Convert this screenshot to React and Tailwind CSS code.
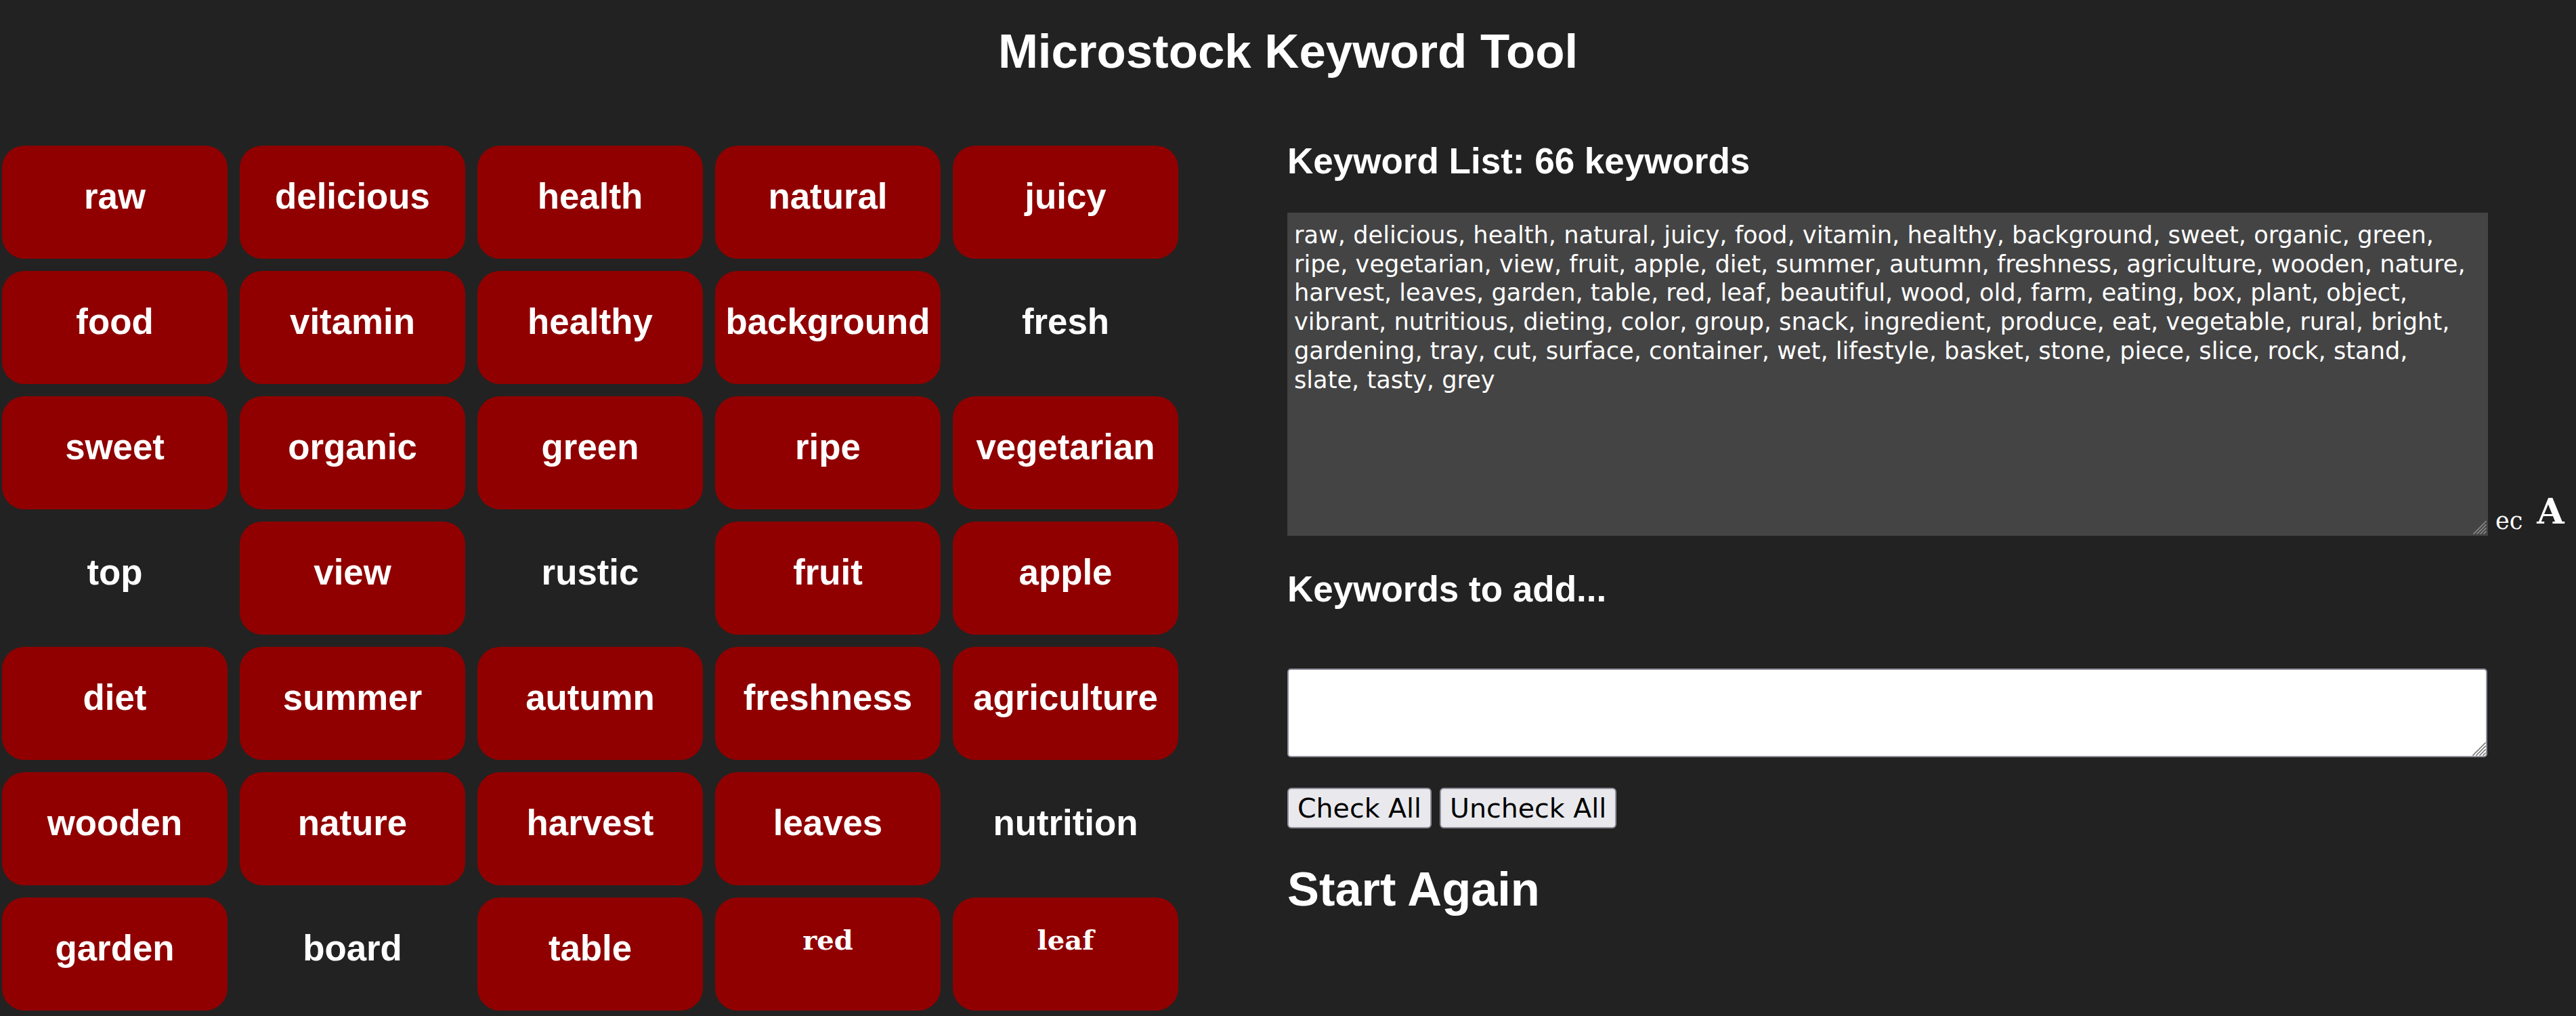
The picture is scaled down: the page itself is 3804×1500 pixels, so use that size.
import React from "react";

const rows = [
  [["raw", 1], ["delicious", 1], ["health", 1], ["natural", 1], ["juicy", 1]],
  [["food", 1], ["vitamin", 1], ["healthy", 1], ["background", 1], ["fresh", 0]],
  [["sweet", 1], ["organic", 1], ["green", 1], ["ripe", 1], ["vegetarian", 1]],
  [["top", 0], ["view", 1], ["rustic", 0], ["fruit", 1], ["apple", 1]],
  [["diet", 1], ["summer", 1], ["autumn", 1], ["freshness", 1], ["agriculture", 1]],
  [["wooden", 1], ["nature", 1], ["harvest", 1], ["leaves", 1], ["nutrition", 0]],
  [["garden", 1], ["board", 0], ["table", 1], ["red", 2], ["leaf", 2]],
];

const listText = [
  "raw, delicious, health, natural, juicy, food, vitamin, healthy, background, sweet, organic, green,",
  "ripe, vegetarian, view, fruit, apple, diet, summer, autumn, freshness, agriculture, wooden, nature,",
  "harvest, leaves, garden, table, red, leaf, beautiful, wood, old, farm, eating, box, plant, object,",
  "vibrant, nutritious, dieting, color, group, snack, ingredient, produce, eat, vegetable, rural, bright,",
  "gardening, tray, cut, surface, container, wet, lifestyle, basket, stone, piece, slice, rock, stand,",
  "slate, tasty, grey",
].join("\n");

function Grip({ color }) {
  return (
    <svg
      className="pointer-events-none absolute bottom-[2px] right-[2px]"
      width="22"
      height="22"
      viewBox="0 0 22 22"
    >
      <g stroke={color} strokeWidth="1.6" strokeLinecap="square">
        <line x1="21" y1="3" x2="3" y2="21" />
        <line x1="21" y1="8" x2="8" y2="21" />
        <line x1="21" y1="13" x2="13" y2="21" />
        <line x1="21" y1="18" x2="18" y2="21" />
      </g>
    </svg>
  );
}

function Cell({ word, kind }) {
  if (kind === 2) {
    return (
      <div className="flex h-[167px] items-center justify-center rounded-[33px] bg-[#900000] pb-[42px] font-['DejaVu_Serif',serif] text-[40px] font-bold leading-[normal] text-white">
        {word}
      </div>
    );
  }
  if (kind === 1) {
    return (
      <div className="flex h-[167px] items-center justify-center rounded-[33px] bg-[#900000] pb-[18px] text-[52.8px] font-bold leading-[normal] text-white">
        {word}
      </div>
    );
  }
  return (
    <div className="flex h-[167px] items-center justify-center pb-[18px] text-[52.8px] font-bold leading-[normal] text-white">
      {word}
    </div>
  );
}

export default function App() {
  return (
    <div className="h-[1500px] w-[3804px] overflow-hidden bg-[#222222] font-['Liberation_Sans',Arial,sans-serif] text-white">
      <div className="h-[207px] pt-[35px]">
        <h1 className="text-center text-[70.8px] font-bold leading-[81px]">Microstock Keyword Tool</h1>
      </div>
      <div className="flex items-start">
        <div className="mt-[8px] grid w-[1740px] grid-cols-[repeat(5,333px)] gap-[18px] pl-[3px]">
          {rows.flat().map(([w, k]) => (
            <Cell key={w} word={w} kind={k} />
          ))}
        </div>
        <div className="ml-[161px] flex flex-col">
          <h3 className="text-[53px] font-bold leading-[61px]">Keyword List: 66 keywords</h3>
          <div className="mt-[46px] flex items-end">
            <div className="relative">
              <textarea
                readOnly
                wrap="off"
                defaultValue={listText}
                className="block h-[477px] w-[1773px] resize-none overflow-hidden border-0 bg-[#444444] pl-[10px] pr-[2px] pt-[12px] font-['DejaVu_Sans',sans-serif] text-[35.2px] leading-[42.7px] text-white outline-none"
              />
              <Grip color="#8a8a8a" />
            </div>
            <span className="mb-[4px] ml-[11px] font-['DejaVu_Serif',serif] text-[35px] leading-[35px] text-white">ec</span>
            <span className="mb-[10px] ml-[21px] font-['DejaVu_Serif',serif] text-[52px] font-bold leading-[52px] text-white">A</span>
          </div>
          <h3 className="mt-[48px] text-[53px] font-bold leading-[61px]">Keywords to add...</h3>
          <div className="relative mt-[87px] w-[1772px]">
            <textarea className="block h-[131px] w-[1772px] resize-none rounded-[5px] border-2 border-[#8f8f9d] bg-white outline-none" />
            <Grip color="#777777" />
          </div>
          <div className="mt-[45px] flex gap-[12px]">
            <button className="h-[60px] rounded-[6px] border-2 border-[#8f8f9d] bg-[#e9e9ed] px-[13px] font-['DejaVu_Sans',sans-serif] text-[39.5px] leading-[46px] text-black">
              Check All
            </button>
            <button className="h-[60px] rounded-[6px] border-2 border-[#8f8f9d] bg-[#e9e9ed] px-[13px] font-['DejaVu_Sans',sans-serif] text-[39.5px] leading-[46px] text-black">
              Uncheck All
            </button>
          </div>
          <h2 className="mt-[49px] text-[70.4px] font-bold leading-[81px]">Start Again</h2>
        </div>
      </div>
    </div>
  );
}
